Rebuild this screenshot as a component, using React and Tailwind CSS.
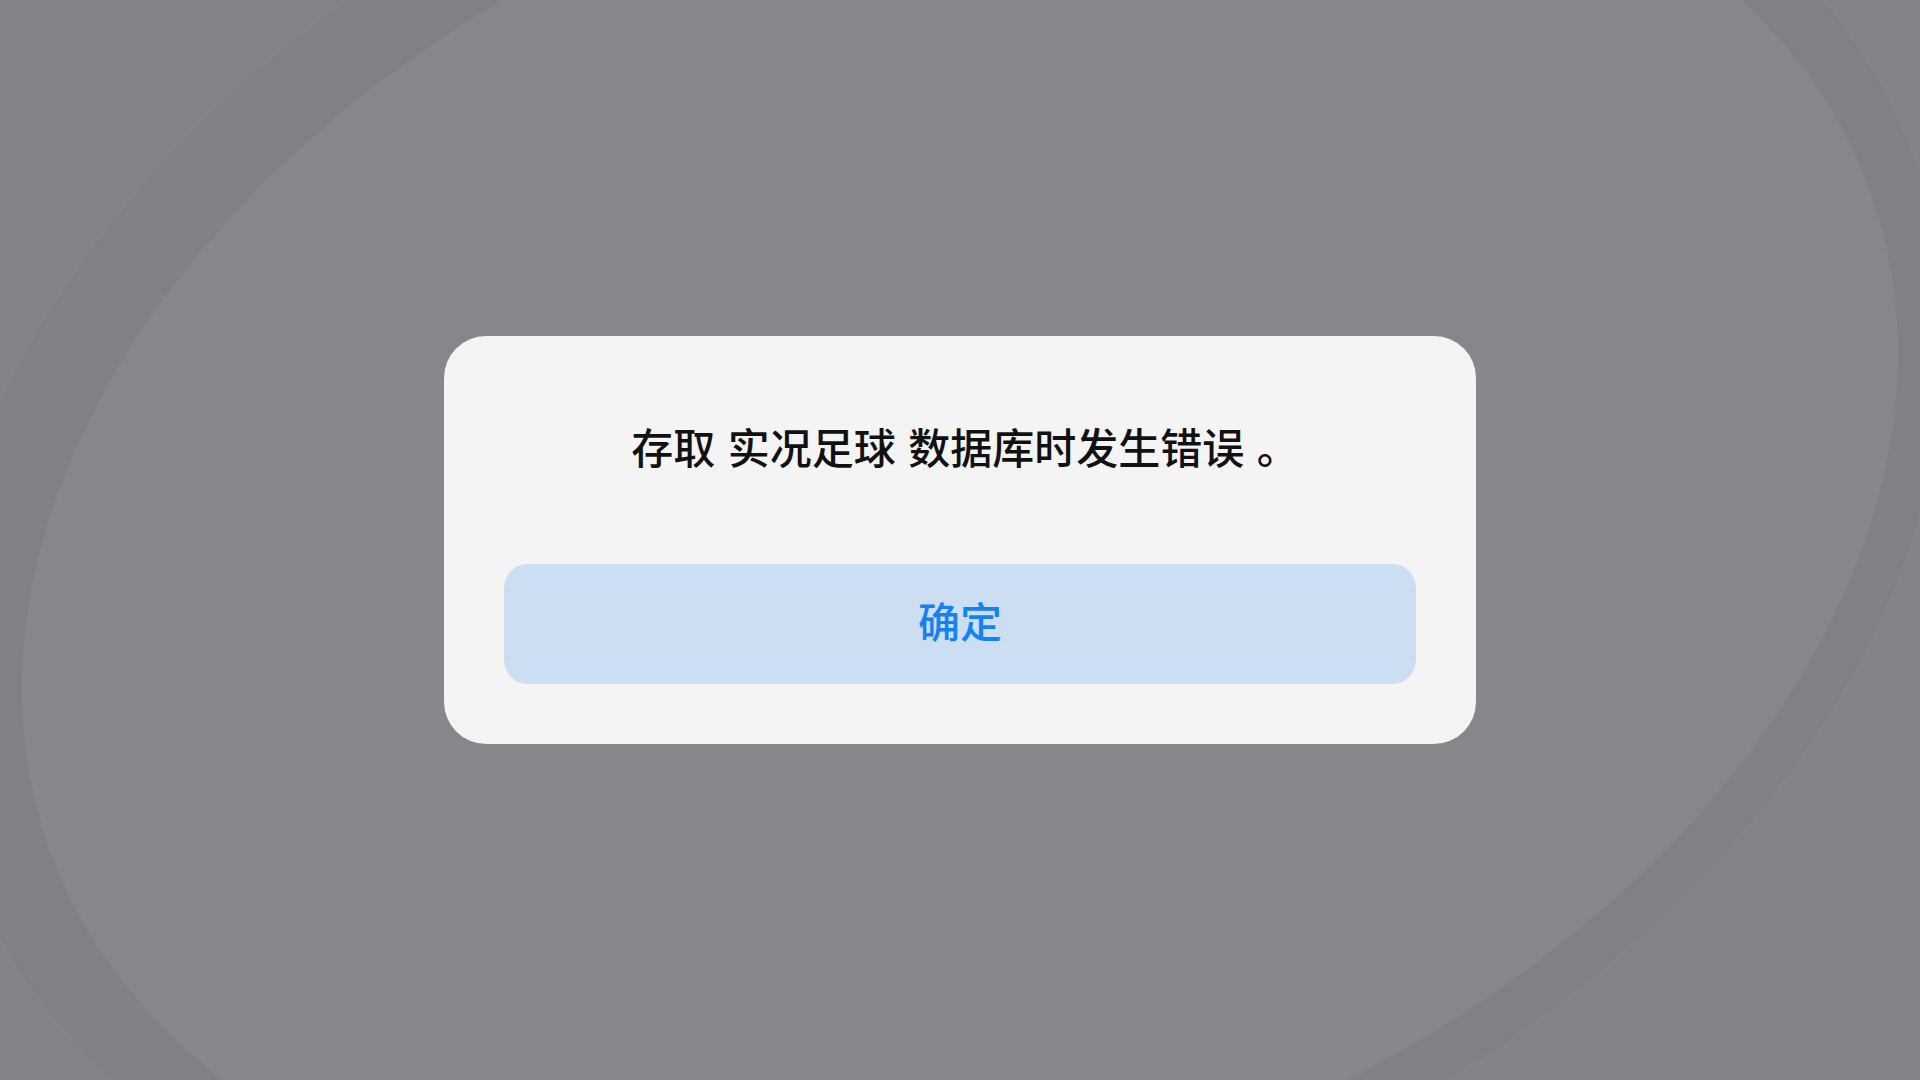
export default function App() {
  return (
    <div className="relative w-screen h-screen overflow-hidden bg-[#838488] font-['Noto_Sans_CJK_SC','Noto_Sans',sans-serif]">
      {/* backdrop swirl */}
      <svg className="absolute inset-0 w-full h-full" viewBox="0 0 1920 1080" preserveAspectRatio="none">
        <g transform="rotate(-20 960 521)">
          <ellipse cx="945" cy="505" rx="1035" ry="735" fill="#808185" />
          <ellipse cx="960" cy="521" rx="968" ry="669" fill="#86878b" />
        </g>
      </svg>

      <div className="relative flex items-center justify-center w-full h-full">
        <div className="w-[1032px] h-[408px] rounded-[42px] bg-[#f4f4f4] px-[60px] pb-[60px] flex flex-col">
          <div className="flex-1 flex items-center justify-center pb-[8px]">
            <p className="ml-[10px] text-[42px] leading-none font-medium text-[#111111] [word-spacing:3px]">
              存取 实况足球 数据库时发生错误 。
            </p>
          </div>
          <button className="h-[120px] w-full rounded-[24px] bg-[#cbdef2] flex items-center justify-center pb-[8px]">
            <span className="text-[42px] leading-none font-medium text-[#1581f7]">确定</span>
          </button>
        </div>
      </div>
    </div>
  )
}
